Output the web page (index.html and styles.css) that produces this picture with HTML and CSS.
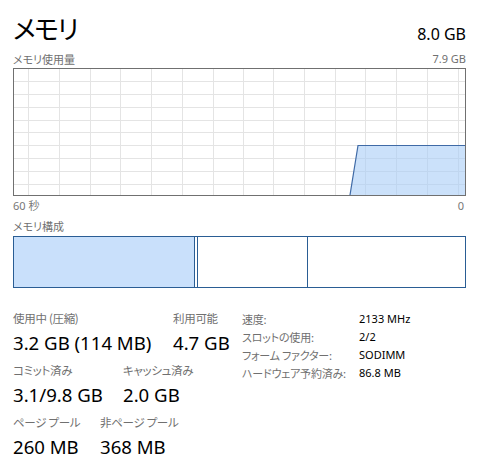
FILE: index.html
```html
<!DOCTYPE html>
<html lang="ja">
<head>
<meta charset="utf-8">
<link rel="stylesheet" href="styles.css">
</head>
<body>
<div class="page">
  <div class="head">
    <div class="title">メモリ</div>
    <div class="total">8.0 GB</div>
  </div>
  <div class="sub">
    <span>メモリ使用量</span>
    <span>7.9 GB</span>
  </div>
  <div class="graph">
    <svg width="451" height="126" viewBox="0 0 451 126">
      <g stroke="#e4e4e4" stroke-width="1">
        <line x1="14.5" y1="0" x2="14.5" y2="126"/>
        <line x1="45.5" y1="0" x2="45.5" y2="126"/>
        <line x1="76.5" y1="0" x2="76.5" y2="126"/>
        <line x1="106.5" y1="0" x2="106.5" y2="126"/>
        <line x1="137.5" y1="0" x2="137.5" y2="126"/>
        <line x1="168.5" y1="0" x2="168.5" y2="126"/>
        <line x1="199.5" y1="0" x2="199.5" y2="126"/>
        <line x1="229.5" y1="0" x2="229.5" y2="126"/>
        <line x1="259.5" y1="0" x2="259.5" y2="126"/>
        <line x1="290.5" y1="0" x2="290.5" y2="126"/>
        <line x1="321.5" y1="0" x2="321.5" y2="126"/>
        <line x1="351.5" y1="0" x2="351.5" y2="126"/>
        <line x1="382.5" y1="0" x2="382.5" y2="126"/>
        <line x1="413.5" y1="0" x2="413.5" y2="126"/>
        <line x1="444.5" y1="0" x2="444.5" y2="126"/>
        <line x1="0" y1="12.5" x2="451" y2="12.5"/>
        <line x1="0" y1="25.5" x2="451" y2="25.5"/>
        <line x1="0" y1="38.5" x2="451" y2="38.5"/>
        <line x1="0" y1="51.5" x2="451" y2="51.5"/>
        <line x1="0" y1="63.5" x2="451" y2="63.5"/>
        <line x1="0" y1="76.5" x2="451" y2="76.5"/>
        <line x1="0" y1="89.5" x2="451" y2="89.5"/>
        <line x1="0" y1="102.5" x2="451" y2="102.5"/>
        <line x1="0" y1="115.5" x2="451" y2="115.5"/>
      </g>
      <polygon points="336,126 344,76.5 451,76.5 451,126" fill="#a9cdf7" fill-opacity="0.6"/>
      <polyline points="336,126 344,76.5 451,76.5" fill="none" stroke="#3f6aa6" stroke-width="1.2"/>
    </svg>
  </div>
  <div class="axis">
    <span>60 秒</span>
    <span>0</span>
  </div>
  <div class="sub comp-label">メモリ構成</div>
  <div class="comp">
    <div class="seg inuse"></div>
    <div class="seg modified"></div>
    <div class="seg standby"></div>
    <div class="seg free"></div>
  </div>
  <div class="stats">
    <div class="left">
      <div class="row">
        <div class="stat w160">
          <div class="lbl">使用中 (圧縮)</div>
          <div class="val">3.2 GB (114 MB)</div>
        </div>
        <div class="stat">
          <div class="lbl">利用可能</div>
          <div class="val">4.7 GB</div>
        </div>
      </div>
      <div class="row">
        <div class="stat w110">
          <div class="lbl">コミット済み</div>
          <div class="val">3.1/9.8 GB</div>
        </div>
        <div class="stat">
          <div class="lbl">キャッシュ済み</div>
          <div class="val">2.0 GB</div>
        </div>
      </div>
      <div class="row">
        <div class="stat w87">
          <div class="lbl">ページ プール</div>
          <div class="val">260 MB</div>
        </div>
        <div class="stat">
          <div class="lbl">非ページ プール</div>
          <div class="val">368 MB</div>
        </div>
      </div>
    </div>
    <div class="right">
      <div class="kv"><span class="k">速度:</span><span class="v">2133 MHz</span></div>
      <div class="kv"><span class="k">スロットの使用:</span><span class="v">2/2</span></div>
      <div class="kv"><span class="k">フォーム ファクター:</span><span class="v">SODIMM</span></div>
      <div class="kv"><span class="k">ハードウェア予約済み:</span><span class="v">86.8 MB</span></div>
    </div>
  </div>
</div>
</body>
</html>
```

FILE: styles.css
```css
html, body {
  margin: 0;
  padding: 0;
  background: #ffffff;
}
body {
  font-family: "Noto Sans", "Noto Sans CJK JP", sans-serif;
  color: #000;
}
.page {
  width: 453px;
  padding: 0 0 0 13px;
}
.title, .sub span:first-child, .comp-label, .lbl, .k, .axis {
  font-feature-settings: "palt" 1;
}
.head {
  display: flex;
  justify-content: space-between;
  align-items: flex-end;
  height: 47px;
  padding-top: 7px;
  box-sizing: border-box;
}
.title {
  font-family: "Noto Sans CJK JP", sans-serif;
  font-size: 26px;
  line-height: 38px;
  font-weight: 400;
  letter-spacing: -1.5px;
}
.total {
  font-size: 16px;
  line-height: 22px;
  padding-bottom: 2px;
}
.sub {
  display: flex;
  justify-content: space-between;
  font-size: 11px;
  line-height: 16px;
  color: #707070;
  height: 16px;
  margin-top: 4px;
}
.sub span:first-child, .comp-label {
  font-family: "Noto Sans CJK JP", sans-serif;
}
.graph {
  margin-top: 1px;
  width: 451px;
  height: 126px;
  border: 1px solid #707070;
}
.graph svg {
  display: block;
}
.axis {
  display: flex;
  justify-content: space-between;
  font-size: 11px;
  line-height: 16px;
  color: #777;
  margin-top: 2px;
  padding-right: 2px;
}
.comp-label {
  margin-top: 4px;
  display: block;
}
.comp {
  display: flex;
  margin-top: 2px;
  width: 453px;
  height: 52px;
  box-sizing: border-box;
  border: 1.5px solid #2a5d94;
}
.seg {
  height: 100%;
}
.inuse {
  width: 180px;
  background: #c9e0fb;
  border-right: 1.5px solid #2a5d94;
}
.modified {
  width: 1.5px;
  border-right: 1.5px solid #2a5d94;
}
.standby {
  width: 109px;
  border-right: 1.5px solid #2a5d94;
}
.free {
  flex: 1;
}
.stats {
  display: flex;
  margin-top: 21px;
}
.left {
  width: 229px;
}
.row {
  display: flex;
  margin-bottom: 2px;
}
.stat {
  display: flex;
  flex-direction: column;
}
.w160 { width: 160px; }
.w110 { width: 110px; }
.w87 { width: 87px; }
.lbl {
  font-family: "Noto Sans CJK JP", sans-serif;
  font-size: 11.5px;
  line-height: 18px;
  letter-spacing: -0.3px;
  color: #707070;
}
.val {
  font-size: 18.6px;
  line-height: 32px;
  color: #000;
  white-space: nowrap;
}
.right {
  padding-top: 1px;
}
.kv {
  display: flex;
  font-size: 11px;
  line-height: 18px;
}
.k {
  width: 117px;
  font-family: "Noto Sans CJK JP", sans-serif;
  letter-spacing: -0.2px;
  color: #707070;
}
.v {
  color: #000;
}
```
